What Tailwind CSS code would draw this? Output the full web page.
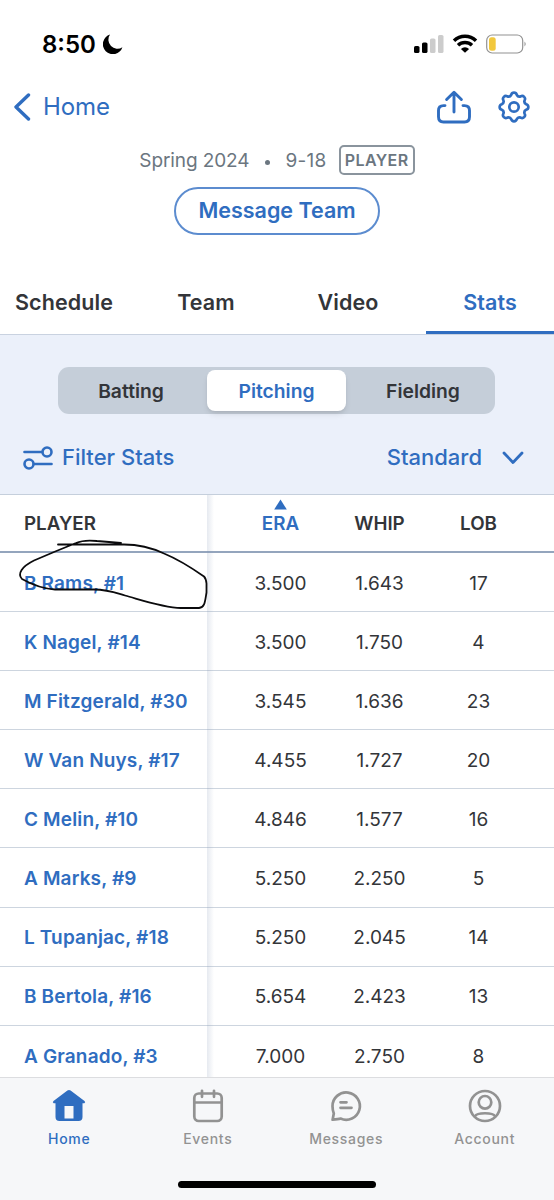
<!DOCTYPE html>
<html lang="en">
<head>
    <meta charset="UTF-8">
    <meta name="viewport" content="width=device-width, initial-scale=1.0">
    <title>Team Stats</title>
    <script src="https://cdn.jsdelivr.net/npm/@tailwindcss/browser@4"></script>
</head>
<body class="bg-white">
<div class="relative w-[554px] h-[1200px] overflow-hidden flex flex-col bg-white text-[#333539] font-['Inter',sans-serif]">
    <!-- Status bar -->
    <div class="h-[76px] shrink-0 pt-3 pl-[42px] pr-[26px] flex items-center justify-between text-black">
        <div class="flex items-center gap-[7px]">
            <span class="pt-px text-[24px] font-semibold">8:50</span>
            <svg class="w-5 h-5" viewBox="0 0 20 20"><path d="M7 .6A10 10 0 1 0 19.4 13.2 9 9 0 0 1 7 .6Z" fill="#000"/></svg>
        </div>
        <div class="flex items-center">
            <svg class="w-[30px] h-5" viewBox="0 0 30 20">
                <rect x="0" y="12" width="5.5" height="7" rx="1.6" fill="#000"/>
                <rect x="8" y="8.5" width="5.5" height="10.5" rx="1.6" fill="#000"/>
                <rect x="16" y="4.5" width="5.5" height="14.5" rx="1.6" fill="#ccc"/>
                <rect x="24" y="1" width="5.5" height="18" rx="1.6" fill="#ccc"/>
            </svg>
            <svg class="w-[26px] h-5 ml-[8px]" viewBox="0 0 26 20" fill="none" stroke="#000" stroke-width="3.5">
                <path d="M2 6.7a16 16 0 0 1 22 0M6 11.2a10.3 10.3 0 0 1 14 0"/>
                <path d="M13 18.7 8.9 14.9a6 6 0 0 1 8.2 0Z" fill="#000" stroke="none"/>
            </svg>
            <svg class="w-[42px] h-5 ml-[8px]" viewBox="0 0 42 20">
                <rect x=".7" y="1" width="36" height="18" rx="5.5" fill="none" stroke="#929292" stroke-width="1.2"/>
                <rect x="3" y="3.3" width="6.7" height="13.4" rx="2.5" fill="#f2c83d"/>
                <path d="M38.5 7.5q2.4 2.5 0 5Z" fill="#929292"/>
            </svg>
        </div>
    </div>

    <!-- Navigation -->
    <div class="h-[62px] shrink-0 pl-[13px] pr-[23px] flex items-center justify-between text-[#2f6dc0]">
        <a href="#" class="flex items-center gap-[12px] text-[24px] tracking-[-0.1px]">
            <svg class="w-[18px] h-7" viewBox="0 0 18 28" fill="none" stroke="currentColor" stroke-width="3.4" stroke-linecap="round" stroke-linejoin="round"><path d="M15.5 2 3 14l12.5 12"/></svg>
            Home
        </a>
        <div class="flex items-center gap-[26px]">
            <svg class="w-[34px] h-[34px]" viewBox="0 0 34 34" fill="none" stroke="currentColor" stroke-width="2.9" stroke-linecap="round" stroke-linejoin="round">
                <path d="M17 22V2.5M9.6 9.5 17 2.2l7.4 7.3M8 15.6H6.5q-5 0-5 5v6.2q0 5.2 5 5.2h21q5 0 5-5.2v-6.2q0-5-5-5H26"/>
            </svg>
            <svg class="w-[34px] h-[34px]" viewBox="-17 -17 34 34" fill="none" stroke="currentColor" stroke-width="2.7" stroke-linejoin="round">
                <path d="M-2.8-12.2A2.9 2.9 0 0 1 2.8-12.2A3.1 3.1 0 0 0 6.65-10.61A2.9 2.9 0 0 1 10.61-6.65A3.1 3.1 0 0 0 12.2-2.8A2.9 2.9 0 0 1 12.2 2.8A3.1 3.1 0 0 0 10.61 6.65A2.9 2.9 0 0 1 6.65 10.61A3.1 3.1 0 0 0 2.8 12.2A2.9 2.9 0 0 1-2.8 12.2A3.1 3.1 0 0 0-6.65 10.61A2.9 2.9 0 0 1-10.61 6.65A3.1 3.1 0 0 0-12.2 2.8A2.9 2.9 0 0 1-12.2-2.8A3.1 3.1 0 0 0-10.61-6.65A2.9 2.9 0 0 1-6.65-10.61A3.1 3.1 0 0 0-2.8-12.2Z"/>
                <circle r="4.7"/>
            </svg>
        </div>
    </div>

    <!-- Team info -->
    <div class="h-[134px] shrink-0 pt-[7px] flex flex-col items-center">
        <div class="h-[30px] flex items-center text-[19px] text-[#6b7680]">
            <span class="pt-[2px] tracking-[-0.1px]">Spring 2024</span>
            <span class="w-[5px] h-[5px] ml-4 mr-[15px] mt-1 rounded-full bg-[#6b7680]"></span>
            <span class="pt-[2px] tracking-[0.3px]">9-18</span>
            <span class="w-[76px] h-[30px] ml-3 flex items-center justify-center rounded-[5px] border-2 border-[#8a949d] text-[16px] font-semibold tracking-[0.4px]">PLAYER</span>
        </div>
        <button class="w-[206px] h-[48px] mt-3 pb-px rounded-full border-2 border-[#5c8ccf] text-[#2f6dc0] text-[21.5px] font-semibold">Message Team</button>
    </div>

    <!-- Tabs -->
    <div class="h-[63px] shrink-0 flex justify-between border-b border-[#c9d2e0] text-[21.5px] font-semibold tracking-[0.1px]">
        <div class="w-32 pt-[14px] text-center">Schedule</div>
        <div class="w-32 pt-[14px] text-center">Team</div>
        <div class="w-32 pt-[14px] text-center">Video</div>
        <div class="w-32 pt-[14px] text-center text-[#2f6dc0] border-b-3 border-[#2f6dc0]">Stats</div>
    </div>

    <!-- Filters -->
    <div class="h-[160px] shrink-0 pt-8 bg-[#ebf0fa] border-b border-[#c5cfdc]">
        <div class="w-[437px] h-[47px] ml-[58px] px-1 flex items-center justify-between rounded-[11px] bg-[#c5ced9] text-[19.3px] font-semibold">
            <div class="w-[138px] pt-[2px] text-center">Batting</div>
            <div class="w-[139px] h-[41px] pt-[2px] flex items-center justify-center rounded-[8px] bg-white text-[#2f6dc0] shadow-md">Pitching</div>
            <div class="w-[138px] pt-[2px] pl-[2px] text-center">Fielding</div>
        </div>
        <div class="mt-[27px] pl-[23px] pr-[30px] flex items-center justify-between text-[22px] font-medium text-[#2f6dc0]">
            <div class="flex items-center gap-[9px]">
                <svg class="w-[30px] h-6" viewBox="0 0 30 24" fill="none" stroke="currentColor" stroke-width="2.6" stroke-linecap="round">
                    <circle cx="24" cy="6" r="4.5"/><path d="M1.5 6H19"/>
                    <circle cx="6" cy="18" r="4.5"/><path d="M11 18h17.5"/>
                </svg>
                <span>Filter Stats</span>
            </div>
            <div class="flex items-center gap-5">
                <span>Standard</span>
                <svg class="w-[22px] h-[14px]" viewBox="0 0 22 14" fill="none" stroke="currentColor" stroke-width="2.8" stroke-linecap="round" stroke-linejoin="round"><path d="m2 2 9 9.5L20 2"/></svg>
            </div>
        </div>
    </div>

    <!-- Stats table -->
    <div class="relative h-[582px] shrink-0 overflow-hidden">
        <div class="h-[58px] pt-[2px] flex items-center border-b-2 border-[#94a5bd] text-[18.8px] font-semibold">
            <div class="w-[231px] pl-6">PLAYER</div>
            <div class="relative w-[99px] text-center text-[#2f6dc0]">
                <svg class="absolute left-[43px] -top-[11px] w-[13px] h-[11px]" viewBox="0 0 13 11"><path d="M6.5.5 12.8 10.5H.2Z" fill="currentColor"/></svg>
                ERA
            </div>
            <div class="w-[99px] text-center">WHIP</div>
            <div class="w-[99px] text-center">LOB</div>
        </div>
        <div id="rows"></div>
        <div class="absolute left-[207px] top-0 w-[7px] h-full bg-linear-to-r from-[#8194b4]/20 to-transparent"></div>
        <!-- Pen mark around the first player -->
        <svg class="absolute left-0 top-0 w-[230px] h-[130px]" viewBox="0 494.5 230 130" fill="none" stroke="#0b0b0d" stroke-width="1.8" stroke-linecap="round" stroke-linejoin="round">
            <path d="M58 544H124C136 544 149 546 164 553C181 560 194 569 204 576Q206 578 206.5 583V592C205 601 205 607 199 607.5H181C163 607 143 600 125 595C115 592 108 589 94 589H55C40 588 30 583 22 578.5C17 573 22 566 34 560L54 551.5L76 542.5Q84 539 97 540.5L121 542.5"/>
        </svg>
    </div>

    <!-- Bottom bar -->
    <div class="relative h-[123px] shrink-0 pt-[11px] flex border-t border-[#dcdde0] bg-[#f6f7f9] text-[14px] font-medium tracking-[0.7px] text-[#929292]">
        <div class="w-[138.5px] flex flex-col items-center gap-[5px] text-[#2f6dc0]">
            <svg class="w-[34px] h-[34px]" viewBox="0 0 34 34" fill="currentColor"><path fill-rule="evenodd" d="M15.4 1.5q1.6-1.2 3.2 0L32.5 12q1.5 1.3-.2 2.3H30.5V28q0 4-4 4h-19q-4 0-4-4V14.3H1.7Q0 13.3 1.5 12ZM12.500 17v12.500h9V17Z"/></svg>
            <span>Home</span>
        </div>
        <div class="w-[138.5px] flex flex-col items-center gap-[5px]">
            <svg class="w-[34px] h-[34px]" viewBox="0 0 34 34" fill="none" stroke="currentColor" stroke-width="2.7" stroke-linecap="round"><rect x="3.3" y="4.5" width="27.4" height="27.5" rx="4.5"/><path d="M3.5 13.5h27M11 1.8v6M23 1.8v6"/></svg>
            <span>Events</span>
        </div>
        <div class="w-[138.5px] flex flex-col items-center gap-[5px]">
            <svg class="w-[34px] h-[34px]" viewBox="0 0 34 34" fill="none" stroke="currentColor" stroke-width="2.7" stroke-linecap="round" stroke-linejoin="round"><path d="M3.6 30.7 4.8 24.5Q3.5 21 3.5 17.3A13.7 13.7 0 1 1 11.5 29.6Q9.5 29.9 3.6 30.7Z"/><path d="M11.5 13.3h6M11.5 18.8h11"/></svg>
            <span>Messages</span>
        </div>
        <div class="w-[138.5px] flex flex-col items-center gap-[5px]">
            <svg class="w-[34px] h-[34px]" viewBox="0 0 34 34" fill="none" stroke="currentColor" stroke-width="2.7"><circle cx="17" cy="17" r="15"/><circle cx="17" cy="13.3" r="6.3"/><path d="M7 27.2q1.5-3 10-3t10 3" stroke-width="2.5"/></svg>
            <span>Account</span>
        </div>
        <div class="absolute left-[178px] bottom-[12px] w-[198px] h-[7px] rounded-full bg-black"></div>
    </div>
</div>

<script>
    const players = [
        ['B Rams, #1', '3.500', '1.643', '17'],
        ['K Nagel, #14', '3.500', '1.750', '4'],
        ['M Fitzgerald, #30', '3.545', '1.636', '23'],
        ['W Van Nuys, #17', '4.455', '1.727', '20'],
        ['C Melin, #10', '4.846', '1.577', '16'],
        ['A Marks, #9', '5.250', '2.250', '5'],
        ['L Tupanjac, #18', '5.250', '2.045', '14'],
        ['B Bertola, #16', '5.654', '2.423', '13'],
        ['A Granado, #3', '7.000', '2.750', '8'],
    ];

    document.getElementById('rows').innerHTML = players.map(([name, era, whip, lob]) => `
        <div class="h-[59.1px] pt-[4px] flex items-center border-b border-[#cdd5df] text-[19px]">
            <div class="w-[231px] pl-6 font-semibold tracking-[0.15px] text-[#2f6dc0]">${name}</div>
            <div class="w-[99px] text-center">${era}</div>
            <div class="w-[99px] text-center">${whip}</div>
            <div class="w-[99px] text-center">${lob}</div>
        </div>
    `).join('');
</script>
</body>
</html>
